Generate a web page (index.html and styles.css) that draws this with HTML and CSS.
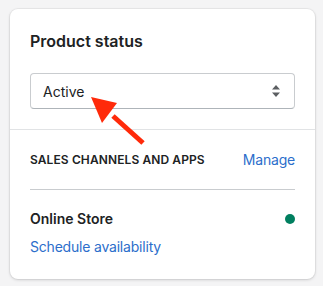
FILE: index.html
```html
<!DOCTYPE html>
<html lang="en">
<head>
    <meta charset="UTF-8">
    <meta name="viewport" content="width=device-width, initial-scale=1.0">
    <title>Product status</title>
    <link rel="stylesheet" href="styles.css">
</head>
<body>
    <div class="card">
        <div class="section">
            <h2>Product status</h2>
            <div class="select">
                <span>Active</span>
                <svg class="select-icon" width="10" height="14" viewBox="0 0 10 14">
                    <path d="M5 1 L9 5.5 H1 Z M5 13 L1 8.5 H9 Z" fill="#5c5f62"/>
                </svg>
            </div>
        </div>
        <div class="section">
            <div class="channels-head">
                <span class="label">SALES CHANNELS AND APPS</span>
                <a href="#">Manage</a>
            </div>
            <div class="divider"></div>
            <div class="channel">
                <span class="channel-name">Online Store</span>
                <span class="dot"></span>
            </div>
            <a class="schedule" href="#">Schedule availability</a>
        </div>

        <!-- annotation arrow -->
        <svg class="arrow" width="80" height="60" viewBox="0 0 80 60">
            <path d="M52 46 L22 19" stroke="#ff2a0a" stroke-width="5" stroke-linecap="butt"/>
            <path d="M0 0 L26 6 L11 26 Z" fill="#ff2a0a"/>
        </svg>
    </div>
</body>
</html>
```

FILE: styles.css
```css
* {
    margin: 0;
    padding: 0;
    box-sizing: border-box;
}

body {
    background: #f4f4f5;
    font-family: Inter, "Noto Sans", sans-serif;
    color: #202223;
    padding: 9px 8px 9px 10px;
}

.card {
    position: relative;
    width: 305px;
    background: #ffffff;
    border-radius: 8px;
    box-shadow: 0 0 0 1px rgba(63, 63, 68, 0.05), 0 1px 3px rgba(63, 63, 68, 0.2);
}

.section {
    padding: 20px;
}

.section + .section {
    border-top: 1px solid #e1e3e5;
    padding-bottom: 22px;
}

h2 {
    font-size: 16px;
    font-weight: 600;
    line-height: 24px;
    margin-bottom: 20px;
}

.select {
    display: flex;
    justify-content: space-between;
    align-items: center;
    height: 36px;
    padding: 0 12px 0 12px;
    border: 1px solid #c9cccf;
    border-bottom-color: #aeb4b9;
    border-radius: 4px;
    font-size: 14px;
}

.select-icon {
    margin-right: 1px;
}

.channels-head {
    display: flex;
    justify-content: space-between;
    align-items: center;
    line-height: 20px;
}

.label {
    font-size: 12px;
    font-weight: 600;
    letter-spacing: 0.1px;
}

a {
    color: #2c6ecb;
    text-decoration: none;
    font-size: 14px;
    letter-spacing: -0.2px;
}

.divider {
    height: 1px;
    background: #c9cccf;
    margin: 19px 0 19px;
}

.channel {
    display: flex;
    justify-content: space-between;
    align-items: center;
    line-height: 20px;
}

.channel-name {
    font-size: 14px;
    font-weight: 600;
}

.dot {
    width: 10px;
    height: 10px;
    border-radius: 50%;
    background: #007f5f;
}

.schedule {
    display: block;
    line-height: 20px;
    margin-top: 8px;
}

.arrow {
    position: absolute;
    left: 81px;
    top: 88px;
}
```
